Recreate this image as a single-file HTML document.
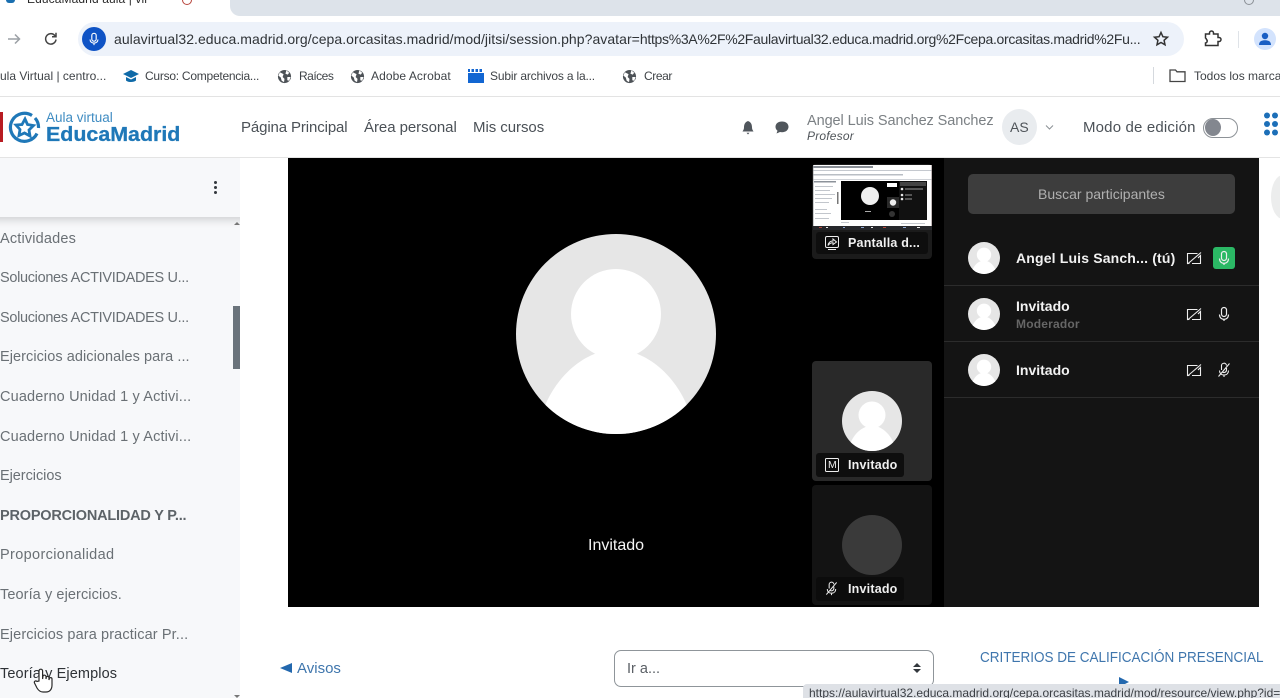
<!DOCTYPE html>
<html lang="es">
<head>
<meta charset="utf-8">
<title>Aula Virtual EducaMadrid</title>
<style>
html,body{margin:0;padding:0;width:1280px;height:698px;overflow:hidden;background:#fff;font-family:"Liberation Sans",sans-serif}
#p{position:relative;width:1280px;height:698px;overflow:hidden}
#p div,#p svg{position:absolute}
.t{white-space:nowrap;position:absolute}
.bm{font-size:12px;color:#3f4347;top:69px;line-height:15px}
.nav{font-size:15px;color:#4b5157;top:119px;line-height:18px}
.sb{font-size:14.5px;color:#6a7075;left:0;line-height:18px}
.sep{left:944px;width:315px;height:1px;background:#2c2c2c}
.nm{font-size:14px;font-weight:bold;color:#f2f2f2;line-height:16px;left:1016px}
.lab{background:#0e0e0e;border-radius:3px}
.fn{font-size:12.5px;line-height:15px;font-weight:bold;color:#f0f0f0;letter-spacing:.2px}
</style>
</head>
<body>
<div id="p">
<svg width="0" height="0" style="left:0;top:0">
<defs>
<symbol id="av" viewBox="0 0 200 200">
<circle cx="100" cy="100" r="100" fill="#e6e6e6"/>
<clipPath id="c"><circle cx="100" cy="100" r="100"/></clipPath>
<g clip-path="url(#c)" fill="#fff"><circle cx="100" cy="80" r="45"/><path d="M31 167C45 138 68 122 85 118H115C132 122 155 138 169 167L185 205H15Z"/></g>
</symbol>
<symbol id="cam" viewBox="0 0 16 16"><g fill="none" stroke="#eee" stroke-width="1.1"><path d="M11.500 3.500H1.500V13.500H3.500M6 13.500H14.500V5.500L12 8"/><path d="M1.500 14L15 2.500"/></g></symbol>
<symbol id="mic" viewBox="0 0 16 16"><g fill="none" stroke="#eee" stroke-width="1.2"><rect x="5.500" y="1.500" width="5" height="9" rx="2.500"/><path d="M3.500 8.500C3.500 15 12.500 15 12.500 8.500M8 13V15"/></g></symbol>
<symbol id="mut" viewBox="0 0 16 16"><g fill="none" stroke="#eee" stroke-width="1.1"><path d="M5.500 8V4a2.500 2.500 0 0 1 5-.5M10.500 6V8a2.500 2.500 0 0 1-4 2"/><path d="M3.500 8.500C3.500 11 5 13 8 13s4.500-2 4.500-4.500M8 13V15"/><path d="M2.500 14.500L13.500 1.500"/></g></symbol>
<symbol id="globe" viewBox="0 0 16 16"><circle cx="8" cy="8" r="7" fill="#4d5257"/><path d="M3 3.500L7 5.500 6 8.500 8 10.500 7.500 14 5 12.500 4 9 1.500 7ZM10 1.500L13 4 11.500 6 9 5ZM11 8.500L14.500 8.500 13 12.500 11 12Z" fill="#fff"/></symbol>
</defs>
</svg>

<!-- browser chrome -->
<div style="left:0;top:0;width:1280px;height:97px;background:#fff"></div>
<div style="left:230px;top:0;width:1050px;height:16px;background:#dde3ea;border-bottom-left-radius:10px"></div>
<div style="left:6px;top:0;width:9px;height:3px;background:#1a6fb0;border-radius:0 0 5px 5px"></div>
<div class="t" style="left:27px;top:-8px;font-size:12px;line-height:14px;color:#2a2a2a;letter-spacing:.1px">EducaMadrid aula | vir</div>
<div style="left:182px;top:-5px;width:8px;height:8px;border:1.500px solid #b8453c;border-radius:50%"></div>
<div style="left:1244px;top:-5px;width:8px;height:8px;border:1.500px solid #8b9096;border-radius:50%"></div>
<svg style="left:6px;top:31px" width="16" height="16" viewBox="0 0 16 16"><path d="M2 8H13M9 3.500L13.500 8 9 12.500" fill="none" stroke="#9ba0a5" stroke-width="1.500"/></svg>
<svg style="left:43px;top:31px" width="16" height="16" viewBox="0 0 16 16"><path d="M13 8.500A5.200 5.200 0 1 1 11.500 4.200L13 5.500M13 1.800V5.800H9" fill="none" stroke="#444" stroke-width="1.500"/></svg>
<div style="left:78px;top:22px;width:1106px;height:34px;background:#edf2fa;border-radius:17px"></div>
<div style="left:82px;top:27px;width:24px;height:24px;background:#0f53c5;border-radius:50%"></div>
<svg style="left:87px;top:32px" width="14" height="14" viewBox="0 0 16 16"><g fill="none" stroke="#fff" stroke-width="1.300"><rect x="5.500" y="1.500" width="5" height="9" rx="2.500"/><path d="M3.500 8.500C3.500 14 12.500 14 12.500 8.500M8 12.500V15"/></g></svg>
<div class="t" style="left:114px;top:31px;font-size:14px;line-height:16px;color:#2f3337;letter-spacing:.05px">aulavirtual32.educa.madrid.org/cepa.orcasitas.madrid/mod/jitsi/session.php?avatar=<span style="letter-spacing:-.31px">https%3A%2F%2Faulavirtual32.educa.madrid.org%2Fcepa.orcasitas.madrid%2Fu...</span></div>
<svg style="left:1152px;top:30px" width="18" height="18" viewBox="0 0 18 18"><path d="M9 2.500L10.900 6.700 15.500 7.200 12.100 10.300 13 14.800 9 12.500 5 14.800 5.900 10.300 2.500 7.200 7.100 6.700Z" fill="none" stroke="#333" stroke-width="1.500"/></svg>
<svg style="left:1202px;top:29px" width="20" height="20" viewBox="0 0 20 20"><path d="M3.500 5H7.500V4A2 2 0 0 1 11.500 4V5H16V8.500H17A2 2 0 0 1 17 12.500H16V16.500H3.500V14A2 2 0 0 0 4.500 10.500 2 2 0 0 0 3.500 9Z" fill="none" stroke="#333" stroke-width="1.500"/></svg>
<div style="left:1238px;top:31px;width:1px;height:17px;background:#dfe3e8"></div>
<div style="left:1254px;top:28px;width:22px;height:22px;background:#d3e3fd;border-radius:50%"></div>
<svg style="left:1257px;top:31px" width="16" height="16" viewBox="0 0 16 16"><circle cx="8" cy="5" r="3.200" fill="#1a5fc4"/><path d="M2 14C2 10 5 9.200 8 9.200S14 10 14 14Z" fill="#1a5fc4"/></svg>

<!-- bookmarks -->
<div class="t bm" style="left:0">ula Virtual | centro...</div>
<svg style="left:123px;top:69px" width="16" height="15" viewBox="0 0 16 15"><path d="M8 1L16 5 8 9 0 5Z" fill="#0f6aa8"/><path d="M3 8V11.500C5 13.500 11 13.500 13 11.500V8L8 10.500Z" fill="#0f6aa8"/></svg>
<div class="t bm" style="left:145px;letter-spacing:-.25px">Curso: Competencia...</div>
<svg style="left:277px;top:69px" width="15" height="15"><use href="#globe"/></svg>
<div class="t bm" style="left:299px;letter-spacing:-.5px">Raíces</div>
<svg style="left:350px;top:69px" width="15" height="15"><use href="#globe"/></svg>
<div class="t bm" style="left:371px;letter-spacing:.08px">Adobe Acrobat</div>
<svg style="left:468px;top:69px" width="16" height="15" viewBox="0 0 16 15"><path d="M0 4H16V14H0Z" fill="#1266d2"/><path d="M0 0H2V3H0ZM3.500 0H6V3H3.500ZM7.500 0H10V3H7.500ZM11.500 0H14V3H11.500Z" fill="#1266d2"/></svg>
<div class="t bm" style="left:490px;letter-spacing:-.17px">Subir archivos a la...</div>
<svg style="left:622px;top:69px" width="15" height="15"><use href="#globe"/></svg>
<div class="t bm" style="left:644px;letter-spacing:-.4px">Crear</div>
<div style="left:1153px;top:67px;width:1px;height:17px;background:#d5d9de"></div>
<svg style="left:1169px;top:68px" width="17" height="15" viewBox="0 0 17 15"><path d="M1 2H6.500L8 3.800H16V13.500H1Z" fill="none" stroke="#444" stroke-width="1.300"/></svg>
<div class="t bm" style="left:1194px">Todos los marcadores</div>
<div style="left:0;top:96px;width:1280px;height:1px;background:#e3e3e3"></div>

<!-- site header -->
<div style="left:0;top:97px;width:1280px;height:60px;background:#fff"></div>
<div style="left:0;top:157px;width:1280px;height:1px;background:#e4e4e4"></div>
<div style="left:0;top:112px;width:3px;height:30px;background:#b81c22"></div>
<svg style="left:8px;top:111px" width="33" height="33" viewBox="0 0 33 33"><path d="M24 4.500A14 14 0 1 0 29 22.500" fill="none" stroke="#1f78b8" stroke-width="3.200"/><path d="M27 7A14 14 0 0 1 30.500 17" fill="none" stroke="#1f78b8" stroke-width="3.200"/><path d="M17 8L19.500 13.500 25.500 14.500 21 19 22 25 16.500 22 11 24.500 12 18.500 8 14 14 13.500Z" fill="#fff" stroke="#1f78b8" stroke-width="2.800"/></svg>
<div class="t" style="left:46px;top:110px;font-size:13.500px;line-height:15px;color:#3f8cc2">Aula virtual</div>
<div class="t" style="left:46px;top:124px;font-size:20px;line-height:22px;font-weight:bold;color:#1f78b8;transform:scaleX(1.07);transform-origin:left;-webkit-text-stroke:.3px #1f78b8">EducaMadrid</div>
<div class="t nav" style="left:241px;letter-spacing:-.12px">Página Principal</div>
<div class="t nav" style="left:364px;letter-spacing:-.05px">Área personal</div>
<div class="t nav" style="left:473px;letter-spacing:-.05px">Mis cursos</div>
<svg style="left:741px;top:120px" width="14" height="15" viewBox="0 0 14 15"><path d="M7 1C4 2 3 4.500 3 7.500C3 9.500 2 10.500 1.500 11.500H12.500C12 10.500 11 9.500 11 7.500C11 4.500 10 2 7 1ZM5.500 12.800H8.500L7 14.500Z" fill="#50565c"/></svg>
<svg style="left:774px;top:120px" width="16" height="15" viewBox="0 0 16 15"><path d="M8 1.500C4 1.500 1.500 3.800 1.500 6.800C1.500 8.500 2.300 9.800 3.500 10.700L2.500 13.500 6 12C6.600 12.100 7.300 12.200 8 12.200C12 12.200 14.500 9.800 14.500 6.800S12 1.500 8 1.500Z" fill="#50565c"/></svg>
<div class="t" style="left:807px;top:113px;font-size:14.500px;line-height:17px;color:#7b8084;letter-spacing:-.08px">Angel Luis Sanchez Sanchez</div>
<div class="t" style="left:807px;top:129px;font-size:12px;line-height:14px;font-style:italic;color:#4f5459;letter-spacing:.2px">Profesor</div>
<div style="left:1002px;top:109px;width:35px;height:36px;background:#e9ecef;border-radius:50%"></div>
<div class="t" style="left:1010px;top:119px;font-size:14px;line-height:16px;color:#4f5459">AS</div>
<svg style="left:1045px;top:124px" width="9" height="7" viewBox="0 0 9 7"><path d="M1 1.500L4.500 5 8 1.500" fill="none" stroke="#8a8f94"/></svg>
<div class="t nav" style="left:1083px;letter-spacing:.17px">Modo de edición</div>
<div style="left:1203px;top:118px;width:33px;height:18px;border:1px solid #8d9297;border-radius:10px;background:#fff"></div>
<div style="left:1205px;top:119px;width:16px;height:17px;background:#83878f;border-radius:50%"></div>
<svg style="left:1262px;top:110px" width="18" height="28" viewBox="0 0 18 28"><g fill="#1c6fb8"><circle cx="5" cy="5.500" r="3"/><circle cx="13" cy="5.500" r="3"/><circle cx="5" cy="14" r="3"/><circle cx="13" cy="14" r="3"/><circle cx="5" cy="22.500" r="3"/><circle cx="13" cy="22.500" r="3"/></g></svg>

<!-- sidebar -->
<div style="left:0;top:158px;width:240px;height:540px;background:#f7f8fa;overflow:hidden">
<div style="left:-20px;top:0;width:280px;height:59px;background:#f7f8fa;box-shadow:0 3px 8px rgba(0,0,0,.16)"></div>
</div>
<div style="left:214px;top:181px;width:3px;height:3px;background:#33383d;border-radius:50%"></div>
<div style="left:214px;top:186px;width:3px;height:3px;background:#33383d;border-radius:50%"></div>
<div style="left:214px;top:191px;width:3px;height:3px;background:#33383d;border-radius:50%"></div>
<div style="left:233px;top:306px;width:7px;height:63px;background:#6a737b"></div>
<div style="left:234px;top:222px;width:0;height:0;border:3px solid transparent;border-bottom:3px solid #777;border-top:0"></div>
<div style="left:234px;top:695px;width:0;height:0;border:3px solid transparent;border-top:3px solid #777;border-bottom:0"></div>
<div class="t sb" style="top:230px;letter-spacing:.17px">Actividades</div>
<div class="t sb" style="top:269px;letter-spacing:-.32px">Soluciones ACTIVIDADES U...</div>
<div class="t sb" style="top:309px;letter-spacing:-.32px">Soluciones ACTIVIDADES U...</div>
<div class="t sb" style="top:348px;letter-spacing:.06px">Ejercicios adicionales para ...</div>
<div class="t sb" style="top:388px;letter-spacing:.15px">Cuaderno Unidad 1 y Activi...</div>
<div class="t sb" style="top:428px;letter-spacing:.15px">Cuaderno Unidad 1 y Activi...</div>
<div class="t sb" style="top:467px;letter-spacing:-.05px">Ejercicios</div>
<div class="t sb" style="top:507px;font-weight:bold;color:#5d6368;letter-spacing:-.2px">PROPORCIONALIDAD Y P...</div>
<div class="t sb" style="top:546px;letter-spacing:.35px">Proporcionalidad</div>
<div class="t sb" style="top:586px;letter-spacing:.09px">Teoría y ejercicios.</div>
<div class="t sb" style="top:626px;letter-spacing:.12px">Ejercicios para practicar Pr...</div>
<div class="t sb" style="top:665px;color:#2e3236;letter-spacing:.11px">Teoría y Ejemplos</div>
<svg style="left:33px;top:667px" width="22" height="27" viewBox="0 0 22 27"><path d="M6 14V4A1.800 1.800 0 0 1 9.600 4V12L10 9A1.600 1.600 0 0 1 13 9.500V12L13.300 10A1.500 1.500 0 0 1 16 10.500V13L16.300 11.500A1.400 1.400 0 0 1 19 12V18C19 22 17 25 13 25H10C7 25 5.500 23.500 4 21L1.500 16C.8 14.500 2.800 13 4 14.500Z" fill="#fff" stroke="#2a2a2a" stroke-width="1.200"/></svg>

<!-- Video -->
<div style="left:288px;top:158px;width:656px;height:449px;background:#000"></div>
<svg style="left:516px;top:234px" width="200" height="200"><use href="#av"/></svg>
<div class="t" style="left:588px;top:537px;font-size:16px;line-height:18px;color:#f5f5f5">Invitado</div>

<!-- filmstrip: screen share -->
<div style="left:812px;top:164px;width:120px;height:95px;background:#1b1b1b;border-radius:4px"></div>
<svg style="left:813px;top:165px" width="119" height="67" viewBox="0 0 119 67">
<rect width="119" height="63" fill="#fff"/>
<rect width="60" height="2" y="1" fill="#8a8f96"/>
<rect width="119" height="1" y="5" fill="#c5c9cf"/>
<rect y="9" width="90" height="1.500" fill="#b9bec4"/>
<rect y="14" width="119" height="1" fill="#d0d3d8"/>
<rect x="1" y="16" width="22" height="1.500" fill="#8c929a"/>
<g fill="#c2c6cc"><rect x="2" y="21" width="18" height="1"/><rect x="2" y="25" width="15" height="1"/><rect x="2" y="29" width="20" height="1"/><rect x="2" y="33" width="17" height="1"/><rect x="2" y="37" width="14" height="1"/><rect x="2" y="44" width="12" height="1"/><rect x="2" y="48" width="16" height="1"/><rect x="2" y="53" width="14" height="1"/></g>
<rect x="24" y="27" width="1.500" height="12" fill="#777"/>
<rect x="28" y="16" width="86" height="39" fill="#000"/>
<circle cx="57" cy="31" r="9" fill="#efefef"/>
<rect x="74" y="18" width="10" height="4" fill="#fff"/>
<rect x="86" y="16" width="28" height="39" fill="#111"/>
<rect x="87" y="17" width="26" height="4" fill="#444"/>
<g fill="#e8e8e8"><circle cx="89" cy="24" r="1.300"/><circle cx="89" cy="30" r="1.300"/><circle cx="89" cy="34" r="1.300"/></g>
<g fill="#999"><rect x="92" y="23.500" width="18" height="1"/><rect x="92" y="29.500" width="7" height="1"/><rect x="92" y="33.500" width="7" height="1"/></g>
<rect x="74" y="32" width="12" height="11" fill="#292929"/>
<circle cx="80" cy="37.500" r="3.200" fill="#eee"/>
<circle cx="79" cy="49" r="3" fill="#333"/>
<rect x="52" y="46" width="6" height="1" fill="#aaa"/>
<g fill="#c5c9cf"><rect x="28" y="57" width="8" height="1"/><rect x="88" y="58" width="24" height="1"/></g>
<rect y="0" width="1" height="63" fill="#9a9da2" opacity=".5"/><rect x="118" width="1" height="63" fill="#9a8a8a" opacity=".6"/>
<rect y="61" width="119" height="4" fill="#26272b"/>
<g fill="#b34a3d"><rect x="6" y="62" width="3" height="1"/><rect x="70" y="62" width="3" height="1"/></g>
<g fill="#8fa8d0"><rect x="30" y="62" width="2" height="1"/><rect x="48" y="62" width="3" height="1"/><rect x="90" y="62" width="3" height="1"/></g>
<g fill="#eee"><rect x="13" y="62" width="2" height="1"/><rect x="58" y="62" width="2" height="1"/><rect x="104" y="62" width="3" height="1"/></g>
</svg>
<div class="lab" style="left:816px;top:232px;width:112px;height:22px"></div>
<svg style="left:825px;top:236px" width="14" height="14" viewBox="0 0 14 14"><g fill="none" stroke="#eee" stroke-width="1"><rect x=".5" y=".5" width="13" height="11" rx="1.500"/><path d="M3 9.500C3.500 6.500 5.500 5 8 5V3L11.500 6 8 8.500V6.800C6 6.800 4.500 7.500 3 9.500Z"/><path d="M3 13.500H11"/></g></svg>
<div class="t fn" style="left:848px;top:236px">Pantalla d...</div>

<!-- filmstrip: Invitado -->
<div style="left:812px;top:361px;width:120px;height:120px;background:#292929;border-radius:4px"></div>
<svg style="left:842px;top:391px" width="60" height="60"><use href="#av"/></svg>
<div class="lab" style="left:816px;top:453px;width:88px;height:24px"></div>
<div style="left:825px;top:458px;width:12px;height:12px;border:1px solid #eee;border-radius:1.500px"></div>
<div class="t" style="left:828px;top:459px;font-size:10.500px;line-height:12px;color:#eee">M</div>
<div class="t fn" style="left:848px;top:458px">Invitado</div>

<div style="left:812px;top:485px;width:120px;height:120px;background:#131313;border-radius:4px"></div>
<div style="left:842px;top:515px;width:60px;height:60px;background:#3a3a3a;border-radius:50%"></div>
<div class="lab" style="left:816px;top:577px;width:88px;height:24px;background:#0c0c0c"></div>
<svg style="left:824px;top:581px" width="15" height="15"><use href="#mut"/></svg>
<div class="t fn" style="left:848px;top:582px">Invitado</div>

<!-- Participants -->
<div style="left:944px;top:158px;width:315px;height:449px;background:#141414"></div>
<div style="left:968px;top:174px;width:267px;height:40px;background:#3d3d3d;border-radius:5px"></div>
<div class="t" style="left:1038px;top:186px;font-size:14px;line-height:16px;color:#b0b0b0">Buscar participantes</div>
<svg style="left:968px;top:242px" width="32" height="32"><use href="#av"/></svg>
<div class="t nm" style="top:250px;letter-spacing:.16px">Angel Luis Sanch... (tú)</div>
<svg style="left:1186px;top:250px" width="16" height="16"><use href="#cam"/></svg>
<div style="left:1213px;top:247px;width:22px;height:22px;background:#2bb865;border-radius:3px"></div>
<svg style="left:1216px;top:250px" width="16" height="16"><use href="#mic"/></svg>
<div class="sep" style="top:285px"></div>
<svg style="left:968px;top:298px" width="32" height="32"><use href="#av"/></svg>
<div class="t nm" style="top:298px">Invitado</div>
<div class="t" style="left:1016px;top:317px;font-size:12px;line-height:14px;font-weight:bold;color:#666;letter-spacing:.2px">Moderador</div>
<svg style="left:1186px;top:306px" width="16" height="16"><use href="#cam"/></svg>
<svg style="left:1216px;top:306px" width="16" height="16"><use href="#mic"/></svg>
<div class="sep" style="top:341px"></div>
<svg style="left:968px;top:354px" width="32" height="32"><use href="#av"/></svg>
<div class="t nm" style="top:362px">Invitado</div>
<svg style="left:1186px;top:362px" width="16" height="16"><use href="#cam"/></svg>
<svg style="left:1216px;top:362px" width="16" height="16"><use href="#mut"/></svg>
<div class="sep" style="top:397px"></div>

<!-- right side floating -->
<div style="left:1271px;top:175px;width:24px;height:44px;background:#eceded;border-radius:50%"></div>

<!-- Bottom nav -->
<div style="left:280px;top:663px;width:0;height:0;border-top:5.500px solid transparent;border-bottom:5.500px solid transparent;border-right:12px solid #2368ae"></div>
<div class="t" style="left:297px;top:660px;font-size:15px;line-height:18px;color:#3f76ad">Avisos</div>
<div style="left:614px;top:650px;width:318px;height:35px;border:1px solid #8f959a;border-radius:7px;background:#fff"></div>
<div class="t" style="left:627px;top:661px;font-size:14.500px;line-height:17px;color:#5b6066">Ir a...</div>
<div style="left:913px;top:663px;width:0;height:0;border-left:4px solid transparent;border-right:4px solid transparent;border-bottom:4.500px solid #33383d"></div>
<div style="left:913px;top:669px;width:0;height:0;border-left:4px solid transparent;border-right:4px solid transparent;border-top:4.500px solid #33383d"></div>
<div class="t" style="left:980px;top:649px;font-size:15px;line-height:18px;color:#3f76ad;transform:scaleX(.9);transform-origin:left">CRITERIOS DE CALIFICACIÓN PRESENCIAL</div>
<div style="left:1119px;top:677px;width:0;height:0;border-top:5px solid transparent;border-bottom:5px solid transparent;border-left:10px solid #2368ae"></div>

<!-- status bubble -->
<div style="left:803px;top:684px;width:477px;height:14px;background:#dee1e6;border-top-left-radius:4px;overflow:hidden">
<div class="t" style="left:6px;top:2px;font-size:12px;line-height:14px;color:#3b3f44">https://aulavirtual32.educa.madrid.org/cepa.orcasitas.madrid/mod/resource/view.php?id=123456</div>
</div>
</div>
</body>
</html>
